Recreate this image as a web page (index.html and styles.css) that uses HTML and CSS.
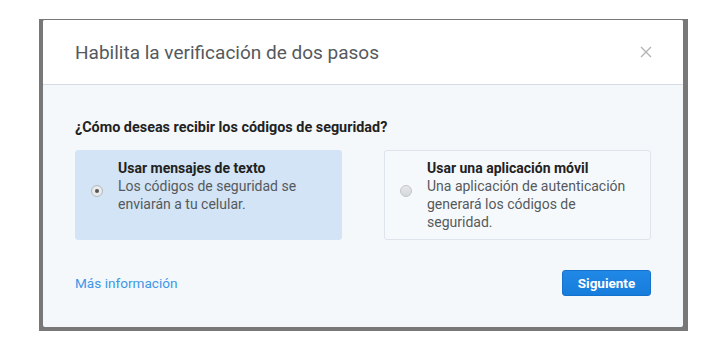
FILE: index.html
```html
<!DOCTYPE html>
<html lang="es">
<head>
<meta charset="utf-8">
<link rel="stylesheet" href="styles.css">
</head>
<body>
<div class="backdrop">
  <div class="dialog">
    <div class="header">
      <h1 class="title">Habilita la verificación de dos pasos</h1>
      <svg class="close" width="12" height="12" viewBox="0 0 12 12"><path d="M1 1L11 11M11 1L1 11" stroke="#b3b3b3" stroke-width="1.4" fill="none"/></svg>
    </div>
    <div class="body">
      <p class="question">¿Cómo deseas recibir los códigos de seguridad?</p>
      <div class="options">
        <div class="option selected">
          <span class="radio checked"></span>
          <div class="opt-text">
            <div class="opt-title">Usar mensajes de texto</div>
            <div class="opt-desc">Los códigos de seguridad se enviarán a tu celular.</div>
          </div>
        </div>
        <div class="option">
          <span class="radio"></span>
          <div class="opt-text">
            <div class="opt-title">Usar una aplicación móvil</div>
            <div class="opt-desc">Una aplicación de autenticación generará los códigos de seguridad.</div>
          </div>
        </div>
      </div>
      <div class="footer">
        <a class="link" href="#">Más información</a>
        <button class="btn">Siguiente</button>
      </div>
    </div>
  </div>
</div>
</body>
</html>
```
FILE: styles.css
```css
html, body { margin: 0; padding: 0; background: #fff; }
body { font-family: Roboto, "Liberation Sans", sans-serif; }
.backdrop {
  margin: 19px 0 0 39px;
  width: 649px;
  height: 312px;
  box-sizing: border-box;
  padding: 1px 5px 4px 4px;
  background: #787878;
}
.dialog {
  height: 100%;
  background: #f4f8fb;
  border-radius: 2px;
  overflow: hidden;
  display: flex;
  flex-direction: column;
}
.header {
  height: 64px;
  background: #fff;
  border-bottom: 1px solid #d5dce3;
  display: flex;
  align-items: center;
  justify-content: space-between;
  padding: 0 31px 0 32px;
  flex: none;
}
.title {
  margin: 0;
  font-size: 19px;
  font-weight: 400;
  color: #55595d;
}
.body {
  padding: 34px 32px 0;
  flex: 1;
}
.question {
  margin: 0;
  font-size: 14.4px;
  line-height: 18px;
  font-weight: 700;
  color: #222;
}
.options {
  margin-top: 13px;
  display: flex;
  gap: 42px;
}
.option {
  flex: 1;
  box-sizing: border-box;
  border-radius: 3px;
  border: 1px solid #dde4eb;
  background: #f6f9fc;
  padding: 8px 18px 8px 15px;
  display: flex;
  align-items: flex-start;
  gap: 15px;
}
.option.selected {
  background: #d2e4f5;
  border-color: #d2e4f5;
}
.radio {
  flex: none;
  width: 12px;
  height: 12px;
  margin-top: 26px;
  box-sizing: border-box;
  border-radius: 50%;
  border: 1px solid #c3c6c9;
  background: linear-gradient(#e6e7e8, #d5d7d9);
  position: relative;
}
.radio.checked {
  background: #e8eaec;
  border-color: #b4b8bc;
}
.radio.checked::after {
  content: "";
  position: absolute;
  left: 3px; top: 3px;
  width: 4px; height: 4px;
  border-radius: 50%;
  background: #555;
}
.opt-text { font-size: 14px; line-height: 18px; }
.opt-title { font-weight: 700; color: #222; }
.opt-desc { color: #55595d; }
.footer {
  margin-top: 30px;
  display: flex;
  justify-content: space-between;
  align-items: center;
}
.link {
  font-size: 13.6px;
  color: #3d97e6;
  text-decoration: none;
}
.btn {
  width: 89px;
  height: 26px;
  border: 1px solid #1572cc;
  border-radius: 3px;
  background: linear-gradient(#2088e6, #177ddc);
  color: #fff;
  font-family: Roboto, "Liberation Sans", sans-serif;
  font-size: 13.5px;
  font-weight: 700;
  padding: 0;
}
```
